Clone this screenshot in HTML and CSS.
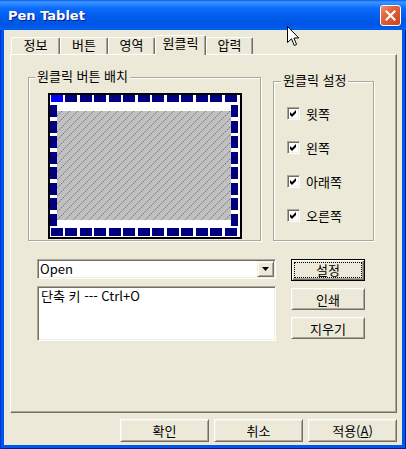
FILE: index.html
```html
<!DOCTYPE html>
<html lang="ko">

<head>
    <meta charset="UTF-8">
    <meta name="viewport" content="width=device-width, initial-scale=1.0">
    <title>Pen Tablet</title>
    <link rel="stylesheet" href="styles.css">
</head>

<body>

    <div class="window">
        <div class="titlebar">
            <span class="title">Pen Tablet</span>
            <span class="close">
                <svg width="11" height="11" viewBox="0 0 11 11">
                    <path d="M1.5 1.5 L9.5 9.5 M9.5 1.5 L1.5 9.5" stroke="#fff" stroke-width="2.2" stroke-linecap="square" />
                </svg>
            </span>
        </div>

        <div class="client">
            <div class="tabs">
                <div class="tab tab-info">정보</div>
                <div class="tab tab-button">버튼</div>
                <div class="tab tab-area">영역</div>
                <div class="tab tab-oneclick active">원클릭</div>
                <div class="tab tab-pressure">압력</div>
            </div>

            <div class="panel">
                <div class="top-row">
                    <div class="group group-layout">
                        <span class="group-title">원클릭 버튼 배치</span>
                        <svg class="tablet" width="194" height="146" viewBox="0 0 194 146">
                            <defs>
                                <pattern id="hatch" width="8" height="8" patternUnits="userSpaceOnUse">
                                    <rect width="8" height="8" fill="#c0c0c0" />
                                    <rect x="7" y="0" width="1" height="1" fill="#7a7a7a" />
                                    <rect x="6" y="1" width="1" height="1" fill="#a4a4a4" />
                                    <rect x="5" y="2" width="1" height="1" fill="#7a7a7a" />
                                    <rect x="4" y="3" width="1" height="1" fill="#a4a4a4" />
                                    <rect x="3" y="4" width="1" height="1" fill="#7a7a7a" />
                                    <rect x="2" y="5" width="1" height="1" fill="#a4a4a4" />
                                    <rect x="1" y="6" width="1" height="1" fill="#7a7a7a" />
                                    <rect x="0" y="7" width="1" height="1" fill="#a4a4a4" />
                                </pattern>
                            </defs>
                            <rect x="1" y="1" width="192" height="144" fill="#fff" stroke="#000" stroke-width="2" />
                            <rect x="9" y="18" width="174" height="109" fill="url(#hatch)" />
                            <g fill="#000080">
                                <!-- top row -->
                                <rect x="3" y="2" width="12" height="7" fill="#0000ff" />
                                <rect x="17" y="2" width="12" height="7" />
                                <rect x="32" y="2" width="12" height="7" />
                                <rect x="46" y="2" width="12" height="7" />
                                <rect x="61" y="2" width="12" height="7" />
                                <rect x="75" y="2" width="12" height="7" />
                                <rect x="90" y="2" width="12" height="7" />
                                <rect x="104" y="2" width="12" height="7" />
                                <rect x="119" y="2" width="12" height="7" />
                                <rect x="133" y="2" width="12" height="7" />
                                <rect x="148" y="2" width="12" height="7" />
                                <rect x="162" y="2" width="12" height="7" />
                                <rect x="177" y="2" width="12" height="7" />
                                <!-- bottom row -->
                                <rect x="3" y="135" width="12" height="8" />
                                <rect x="17" y="135" width="12" height="8" />
                                <rect x="32" y="135" width="12" height="8" />
                                <rect x="46" y="135" width="12" height="8" />
                                <rect x="61" y="135" width="12" height="8" />
                                <rect x="75" y="135" width="12" height="8" />
                                <rect x="90" y="135" width="12" height="8" />
                                <rect x="104" y="135" width="12" height="8" />
                                <rect x="119" y="135" width="12" height="8" />
                                <rect x="133" y="135" width="12" height="8" />
                                <rect x="148" y="135" width="12" height="8" />
                                <rect x="162" y="135" width="12" height="8" />
                                <rect x="177" y="135" width="12" height="8" />
                                <!-- left column -->
                                <rect x="2" y="12" width="7" height="12" />
                                <rect x="2" y="28" width="7" height="12" />
                                <rect x="2" y="43" width="7" height="12" />
                                <rect x="2" y="59" width="7" height="12" />
                                <rect x="2" y="74" width="7" height="12" />
                                <rect x="2" y="90" width="7" height="12" />
                                <rect x="2" y="105" width="7" height="12" />
                                <rect x="2" y="121" width="7" height="12" />
                                <!-- right column -->
                                <rect x="183" y="12" width="7" height="12" />
                                <rect x="183" y="28" width="7" height="12" />
                                <rect x="183" y="43" width="7" height="12" />
                                <rect x="183" y="59" width="7" height="12" />
                                <rect x="183" y="74" width="7" height="12" />
                                <rect x="183" y="90" width="7" height="12" />
                                <rect x="183" y="105" width="7" height="12" />
                                <rect x="183" y="121" width="7" height="12" />
                            </g>
                        </svg>
                    </div>

                    <div class="group group-setup">
                        <span class="group-title">원클릭 설정</span>
                        <div class="checks">
                            <div class="check"><span class="box"><svg width="7" height="7" viewBox="0 0 7 7"><path d="M0 2 L2 4 L6 0 L6 3 L2 7 L0 5 Z" fill="#000" /></svg></span>윗쪽</div>
                            <div class="check"><span class="box"><svg width="7" height="7" viewBox="0 0 7 7"><path d="M0 2 L2 4 L6 0 L6 3 L2 7 L0 5 Z" fill="#000" /></svg></span>왼쪽</div>
                            <div class="check"><span class="box"><svg width="7" height="7" viewBox="0 0 7 7"><path d="M0 2 L2 4 L6 0 L6 3 L2 7 L0 5 Z" fill="#000" /></svg></span>아래쪽</div>
                            <div class="check"><span class="box"><svg width="7" height="7" viewBox="0 0 7 7"><path d="M0 2 L2 4 L6 0 L6 3 L2 7 L0 5 Z" fill="#000" /></svg></span>오른쪽</div>
                        </div>
                    </div>
                </div>

                <div class="bottom-row">
                    <div class="left-col">
                        <div class="combo">
                            <span class="combo-text">Open</span>
                            <span class="drop">
                                <svg width="7" height="4" viewBox="0 0 7 4"><path d="M0 0 H7 L3.5 4 Z" fill="#000" /></svg>
                            </span>
                        </div>
                        <div class="listbox">단축 키 --- Ctrl+O</div>
                    </div>
                    <div class="side-buttons">
                        <button class="btn btn-side btn-default"><span class="focus">설정</span></button>
                        <button class="btn btn-side">인쇄</button>
                        <button class="btn btn-side">지우기</button>
                    </div>
                </div>
            </div>

            <div class="actions">
                <button class="btn btn-action">확인</button>
                <button class="btn btn-action">취소</button>
                <button class="btn btn-action">적용(<u>A</u>)</button>
            </div>
        </div>

        <!-- mouse pointer -->
        <svg class="cursor" width="13" height="21" viewBox="0 0 13 21">
            <path d="M0.5 0.5 V16.5 L4.5 12.8 L7.3 19.5 L9.6 18.5 L6.9 12 H11.8 Z" fill="#fff" stroke="#000" stroke-width="1" />
        </svg>
    </div>

</body>

</html>
```

FILE: styles.css
```css
body {
    margin: 0;
    font-family: "Noto Sans CJK KR", "Liberation Sans", sans-serif;
    font-size: 13px;
    color: #000;
    background-color: #fff;
}

.window {
    position: relative;
    width: 406px;
    height: 449px;
    display: flex;
    flex-direction: column;
    background-color: #0055ea;
    box-shadow: inset 1px 0 #0831d9, inset -1px -1px #001ea0;
}

/* title bar */
.titlebar {
    height: 30px;
    display: flex;
    align-items: center;
    justify-content: space-between;
    padding: 0 5px 0 8px;
    background: linear-gradient(to bottom, #0a5ce8 0px, #3f94ff 2px, #2a88ff 4px, #0d6cfc 8px, #0361f2 14px, #0058e6 20px, #0054e3 24px, #005aec 27px, #0064f7 29px, #0058e8 30px);
}

.title {
    color: #fff;
    font-family: "DejaVu Sans", sans-serif;
    font-weight: bold;
    font-size: 13px;
    text-shadow: 1px 1px #0f1a89;
}

.close {
    width: 21px;
    height: 21px;
    box-sizing: border-box;
    display: flex;
    align-items: center;
    justify-content: center;
    border: 1px solid #fff;
    border-radius: 3px;
    background: linear-gradient(135deg, #f08c6a 0%, #e2603a 40%, #cc4418 100%);
}

/* dialog client */
.client {
    flex: 1;
    margin: 0 4px 4px 4px;
    padding-top: 5px;
    background-color: #ece9d8;
}

.tabs {
    display: flex;
    align-items: flex-end;
    height: 19px;
    margin-left: 7px;
}

.tab {
    height: 17px;
    box-sizing: border-box;
    border-top: 1px solid #fff;
    border-left: 1px solid #fff;
    border-right: 1px solid #716f64;
    box-shadow: inset -1px 0 #aca899;
    border-radius: 2px 2px 0 0;
    text-align: center;
    line-height: 14px;
}

.tab-info { width: 49px; }
.tab-button { width: 48px; }
.tab-area { width: 47px; }
.tab-oneclick { width: 51px; }
.tab-pressure { width: 47px; }

.tab.active {
    position: relative;
    z-index: 1;
    height: 20px;
    margin-bottom: -1px;
    background-color: #ece9d8;
    line-height: 13px;
}

.panel {
    width: 387px;
    height: 359px;
    margin-left: 6px;
    box-sizing: border-box;
    border: 1px solid;
    border-color: #fff #716f64 #716f64 #fff;
    box-shadow: inset -1px -1px #aca899;
}

.top-row {
    display: flex;
    align-items: flex-end;
    gap: 12px;
    padding: 22px 0 0 17px;
}

.group {
    position: relative;
    box-sizing: border-box;
    border: 1px solid #aca899;
    box-shadow: inset 1px 1px #fff, 1px 1px #fff;
}

.group-title {
    position: absolute;
    top: -10px;
    padding: 0 2px;
    line-height: 16px;
    background-color: #ece9d8;
}

.group-layout {
    width: 233px;
    height: 164px;
    padding: 15px 0 0 19px;
}

.group-layout .group-title {
    left: 6px;
}

.tablet {
    display: block;
}

.group-setup {
    width: 101px;
    height: 160px;
    padding: 25px 0 0 13px;
}

.group-setup .group-title {
    left: 7px;
}

.checks {
    display: flex;
    flex-direction: column;
    gap: 21px;
}

.check {
    display: flex;
    align-items: center;
    height: 13px;
    line-height: 13px;
}

.box {
    width: 13px;
    height: 13px;
    box-sizing: border-box;
    margin-right: 6px;
    display: flex;
    align-items: center;
    justify-content: center;
    border: 1px solid;
    border-color: #aca899 #fff #fff #aca899;
    box-shadow: inset 1px 1px #716f64, inset -1px -1px #f1efe2;
    background-color: #fff;
}

.box svg {
    display: block;
}

/* combo, list and side buttons */
.bottom-row {
    display: flex;
    gap: 15px;
    padding: 18px 0 0 26px;
}

.left-col {
    width: 239px;
}

.combo {
    height: 20px;
    box-sizing: border-box;
    display: flex;
    align-items: center;
    padding: 1px;
    border: 1px solid;
    border-color: #aca899 #fff #fff #aca899;
    box-shadow: inset 1px 1px #716f64, inset -1px -1px #f1efe2;
    background-color: #fff;
}

.combo-text {
    flex: 1;
    padding-left: 1px;
    line-height: 16px;
}

.drop {
    width: 17px;
    height: 16px;
    box-sizing: border-box;
    display: flex;
    align-items: center;
    justify-content: center;
    border: 1px solid;
    border-color: #f1efe2 #716f64 #716f64 #f1efe2;
    box-shadow: inset 1px 1px #fff, inset -1px -1px #aca899;
    background-color: #ece9d8;
}

.drop svg {
    display: block;
}

.listbox {
    height: 55px;
    margin-top: 7px;
    box-sizing: border-box;
    padding: 1px 3px;
    line-height: 15px;
    border: 1px solid;
    border-color: #aca899 #fff #fff #aca899;
    box-shadow: inset 1px 1px #716f64, inset -1px -1px #f1efe2;
    background-color: #fff;
}

.side-buttons {
    display: flex;
    flex-direction: column;
    gap: 7px;
}

.btn {
    box-sizing: border-box;
    margin: 0;
    padding: 0;
    font-family: inherit;
    font-size: 13px;
    color: #000;
    background-color: #ece9d8;
    border: 1px solid;
    border-color: #fff #716f64 #716f64 #fff;
    box-shadow: inset 1px 1px #f1efe2, inset -1px -1px #aca899;
    border-radius: 0;
}

.btn-side {
    width: 74px;
    height: 22px;
}

.btn-default {
    padding: 2px;
    border-color: #000;
    box-shadow: inset 1px 1px #fff, inset -1px -1px #716f64, inset -2px -2px #aca899;
}

.focus {
    display: block;
    height: 100%;
    box-sizing: border-box;
    border: 1px dotted #000;
    line-height: 14px;
}

.actions {
    display: flex;
    justify-content: flex-end;
    gap: 5px;
    padding: 6px 5px 0 0;
}

.btn-action {
    width: 89px;
    height: 23px;
}

.cursor {
    position: absolute;
    left: 287px;
    top: 26px;
}
```
